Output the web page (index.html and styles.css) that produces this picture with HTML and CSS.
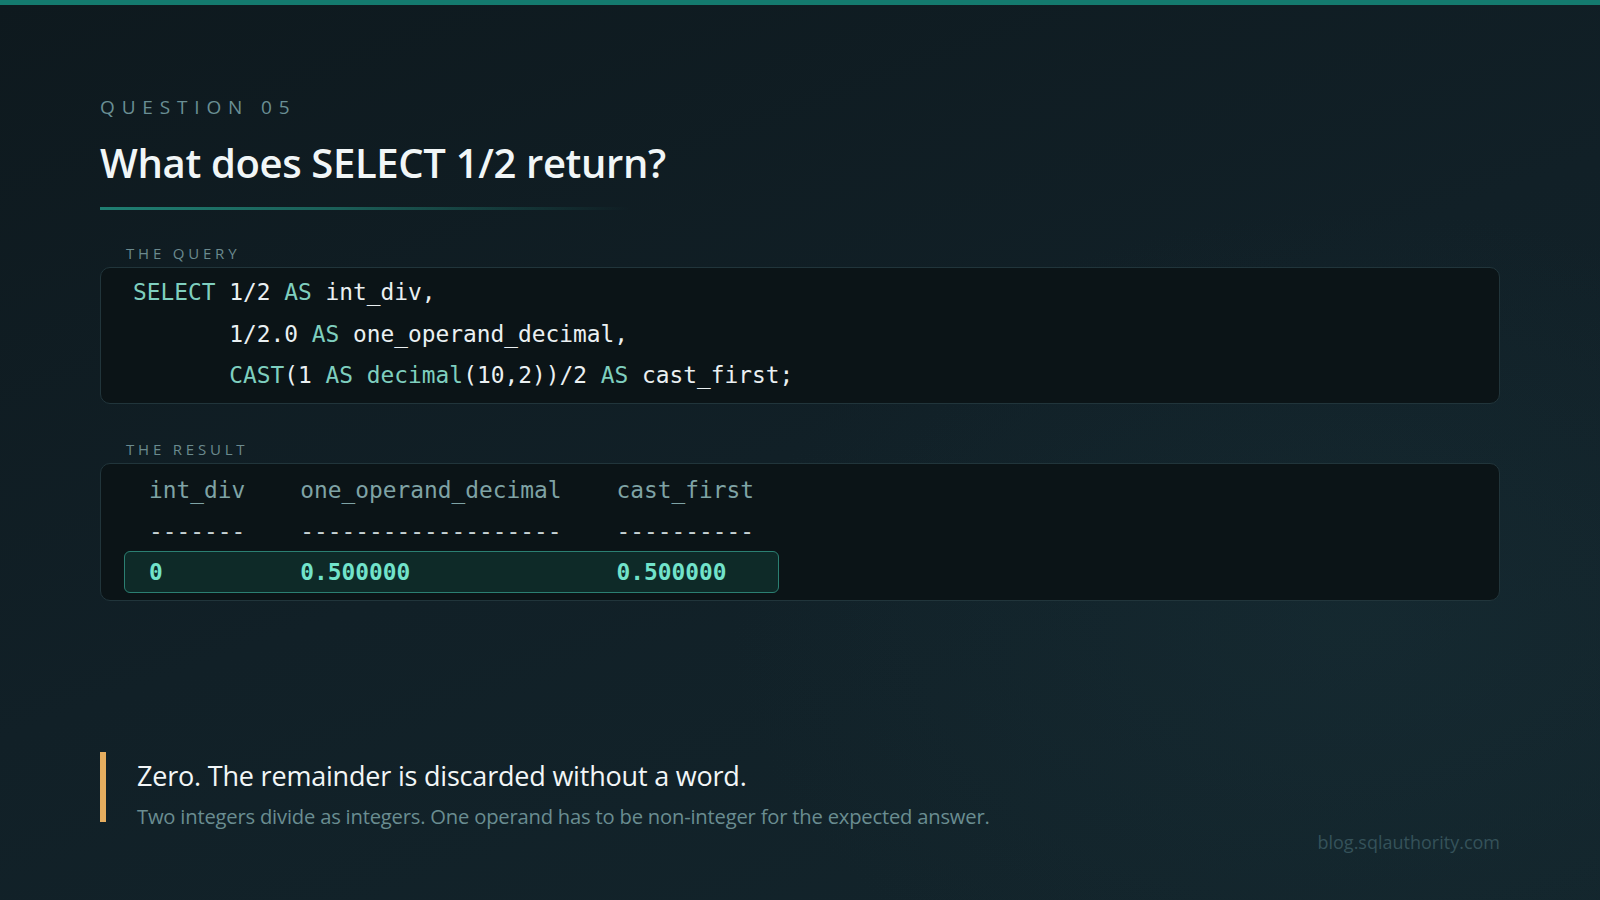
FILE: index.html
```html
<!DOCTYPE html>
<html lang="en">
<head>
<meta charset="utf-8">
<title>Question 05</title>
<link rel="stylesheet" href="styles.css">
</head>
<body>
<div class="topbar"></div>
<main class="slide">
  <header class="head">
    <div class="eyebrow">QUESTION 05</div>
    <h1 class="title">What does SELECT 1/2 return?</h1>
    <div class="rule"></div>
  </header>

  <section class="block block-query">
    <div class="label">THE QUERY</div>
    <pre class="card code"><span class="kw">SELECT</span> 1/2 <span class="kw">AS</span> int_div,
       1/2.0 <span class="kw">AS</span> one_operand_decimal,
       <span class="kw">CAST</span>(1 <span class="kw">AS</span> <span class="kw">decimal</span>(10,2))/2 <span class="kw">AS</span> cast_first;</pre>
  </section>

  <section class="block block-result">
    <div class="label">THE RESULT</div>
    <div class="card result">
      <div class="row head-row"><span>int_div</span><span>one_operand_decimal</span><span>cast_first</span></div>
      <div class="row dash-row"><span>-------</span><span>-------------------</span><span>----------</span></div>
      <div class="row data-row"><span>0</span><span>0.500000</span><span>0.500000</span></div>
    </div>
  </section>

  <div class="spacer"></div>

  <footer class="foot">
    <div class="callout">
      <div class="answer">Zero. The remainder is discarded without a word.</div>
      <div class="explain">Two integers divide as integers. One operand has to be non-integer for the expected answer.</div>
    </div>
    <div class="credit">blog.sqlauthority.com</div>
  </footer>
</main>
</body>
</html>
```

FILE: styles.css
```css
* { box-sizing: border-box; }

html, body {
  margin: 0;
  padding: 0;
  width: 1600px;
  height: 900px;
  overflow: hidden;
}

body {
  background:
    radial-gradient(ellipse 900px 600px at 85% 70%, rgba(26, 52, 60, 0.35), transparent 70%),
    linear-gradient(160deg, #0e191e 0%, #112027 50%, #13252c 100%);
  font-family: "Open Sans", "Noto Sans", sans-serif;
  color: #eef3f4;
  display: flex;
  flex-direction: column;
}

.topbar {
  height: 5px;
  background: #147a6e;
  flex: none;
}

.slide {
  flex: 1;
  display: flex;
  flex-direction: column;
  padding: 89px 100px 0 100px;
}

.eyebrow {
  font-size: 19px;
  letter-spacing: 6.85px;
  color: #6a8f94;
  line-height: 26px;
  font-weight: 400;
}

.title {
  margin: 19px 0 0 0;
  font-size: 40px;
  font-weight: 600;
  line-height: 48px;
  color: #f1f6f7;
  letter-spacing: -0.35px;
}

.rule {
  margin-top: 20px;
  width: 530px;
  height: 3px;
  background: linear-gradient(90deg, #1f7f72 0%, #1b5f58 45%, rgba(20, 50, 50, 0) 100%);
}

.block-query { margin-top: 33px; }
.block-result { margin-top: 35px; }

.label {
  padding-left: 26px;
  font-size: 15px;
  letter-spacing: 3.8px;
  color: #6b8a8e;
  line-height: 20px;
  margin-bottom: 4px;
}

.card {
  margin: 0;
  background: #0b1417;
  border: 1.5px solid #21353b;
  border-radius: 10px;
  font-family: "DejaVu Sans Mono", "Liberation Mono", monospace;
  font-size: 22.85px;
}

.code {
  padding: 4px 32px 6px 32px;
  line-height: 41.5px;
  color: #eaf0f2;
  white-space: pre;
}

.kw { color: #7fcfbf; }

.result {
  padding: 5px 24px 7px 23px;
  line-height: 41px;
}

.row {
  display: grid;
  grid-template-columns: 7ch 19ch 10ch;
  column-gap: 4ch;
  width: max-content;
  padding: 0 24px;
  border: 1.5px solid transparent;
  border-radius: 6px;
}

.head-row, .dash-row { height: 41px; }
.head-row { color: #7fa3a5; }
.dash-row { color: #c7d2d4; }

.data-row {
  background: #0e2a28;
  border-color: #2b7f72;
  color: #72e3cb;
  font-weight: 700;
  line-height: 40px;
}

.spacer { flex: 1; }

.foot {
  display: flex;
  align-items: flex-start;
  justify-content: space-between;
  padding-bottom: 46px;
}

.callout {
  border-left: 6px solid #e5ad5f;
  padding-left: 31px;
  padding-top: 8px;
}

.answer {
  font-size: 27px;
  line-height: 32px;
  color: #f2f6f7;
  letter-spacing: -0.2px;
}

.explain {
  margin-top: 14px;
  margin-bottom: -4.5px;
  font-size: 20.2px;
  line-height: 20px;
  color: #6a8d91;
  letter-spacing: -0.2px;
}

.credit {
  margin-top: 78px;
  font-size: 18px;
  line-height: 24px;
  color: #35525a;
}
```
